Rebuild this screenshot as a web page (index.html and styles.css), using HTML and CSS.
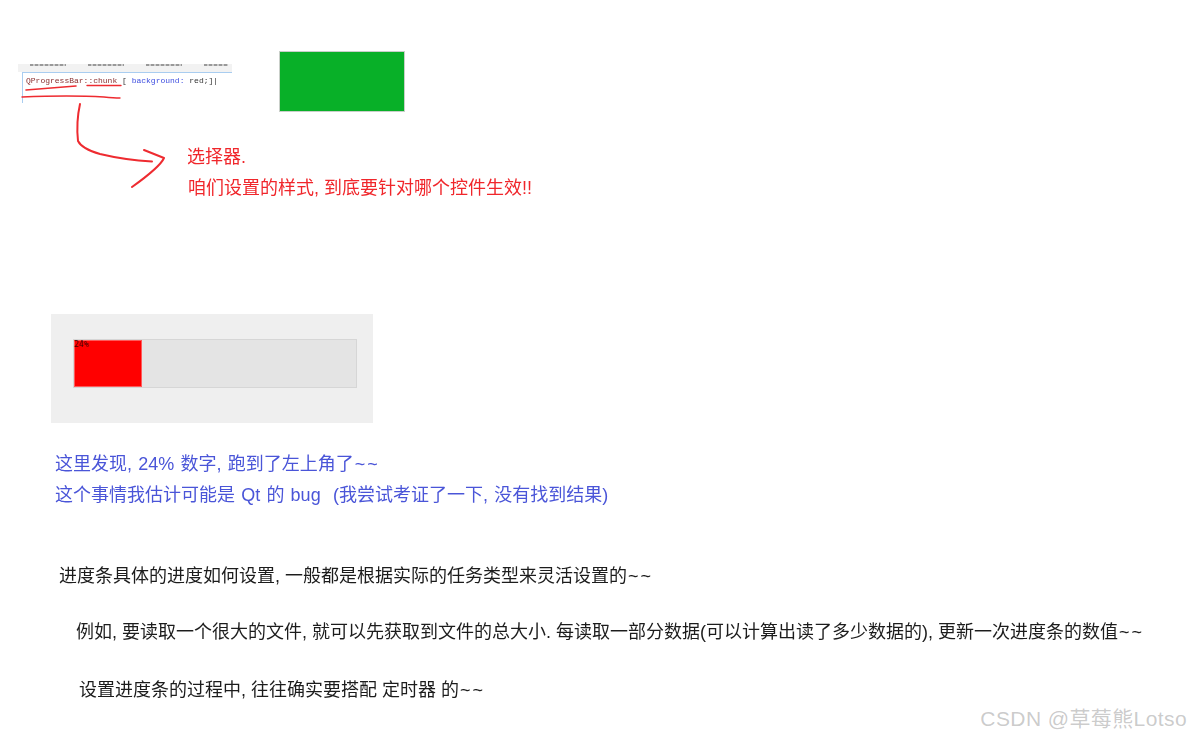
FILE: index.html
```html
<!DOCTYPE html>
<html lang="zh-CN">
<head>
<meta charset="utf-8">
<title>QProgressBar 笔记</title>
<link rel="stylesheet" href="styles.css">
</head>
<body>
<main class="canvas">
  <section class="top">
    <div class="snippet">
      <div class="ruler"><i></i><i></i><i></i><i></i></div>
      <div class="editor"><span class="sel">QProgressBar::chunk</span> <span class="brace">[</span> <span class="prop">background:</span> <span class="val">red;]|</span></div>
    </div>
    <div class="green"></div>
  </section>

  <svg class="ink" width="240" height="200" viewBox="0 0 240 200" aria-hidden="true">
    <g fill="none" stroke="#ee2b30" stroke-linecap="round" stroke-linejoin="round">
      <path stroke-width="1.6" d="M26 90Q50 88 76 86"/>
      <path stroke-width="1.4" d="M87 85.5H121"/>
      <path stroke-width="1.4" d="M22 97Q70 95 104 97Q114 98 120 98"/>
      <path stroke-width="2" d="M80 104Q76 122 78 141Q82 149 100 154Q125 160 152 161.5"/>
      <path stroke-width="2" d="M144 150L164 158Q160 167 132 187"/>
    </g>
  </svg>

  <div class="note note-red">
    <p>选择器.</p>
    <p class="indent-1">咱们设置的样式, 到底要针对哪个控件生效!!</p>
  </div>

  <figure class="demo">
    <div class="track">
      <div class="chunk" style="width:24%"><span class="pct">24%</span></div>
    </div>
  </figure>

  <div class="note note-blue">
    <p>这里发现, 24% 数字, 跑到了左上角了<span class="tilde">~~</span></p>
    <p>这个事情我估计可能是 Qt 的 bug&nbsp; (我尝试考证了一下, 没有找到结果)</p>
  </div>

  <div class="body-notes">
    <p class="p1">进度条具体的进度如何设置, 一般都是根据实际的任务类型来灵活设置的<span class="tilde">~~</span></p>
    <p class="p2">例如, 要读取一个很大的文件, 就可以先获取到文件的总大小. 每读取一部分数据(可以计算出读了多少数据的), 更新一次进度条的数值<span class="tilde">~~</span></p>
    <p class="p3">设置进度条的过程中, 往往确实要搭配 定时器 的<span class="tilde">~~</span></p>
  </div>

  <div class="watermark">CSDN @草莓熊Lotso</div>
</main>
</body>
</html>
```

FILE: styles.css
```css
* { box-sizing: border-box; }
html, body { margin: 0; padding: 0; background: #fff; }
body { width: 1190px; height: 739px; overflow: hidden; font-family: "Liberation Sans", "Noto Sans CJK SC", sans-serif; }
p { margin: 0; }
.canvas { position: relative; width: 1190px; height: 739px; padding-top: 51px; }

.top { display: flex; align-items: flex-start; padding-left: 18px; height: 61px; }
.snippet { width: 214px; height: 39px; margin-top: 13px; background: #fff; overflow: hidden; }
.ruler { display: flex; gap: 22px; height: 8px; padding-left: 12px; background: #f2f2f2; filter: blur(.5px); }
.ruler i { width: 36px; height: 2px; background: repeating-linear-gradient(90deg, #999 0 3px, #ccc 3px 5px); }
.ruler i:last-child { width: 24px; }
.editor { height: 31px; margin-left: 4px; padding: 2px 0 0 3px; border-top: 1px solid #a9cdf0; border-left: 1px solid #a9cdf0; font: 8px/12px "Liberation Mono", monospace; white-space: nowrap; filter: blur(.4px); }
.sel { color: #8a2f2f; }
.brace, .val { color: #333; }
.prop { color: #3f4fe0; }
.green { width: 126px; height: 61px; margin-left: 47px; background: #08b028; border: 1px solid #c9cfc9; }

.ink { position: absolute; left: 0; top: 0; filter: blur(.3px); }

.note { font-size: 18px; line-height: 31px; filter: blur(.3px); }
.note-red { margin: 30px 0 0 187px; color: #f0262b; height: 62px; }
.indent-1 { margin-left: 1px; }

.demo { width: 322px; height: 109px; margin: 110px 0 0 51px; padding: 25px 16px 0 22px; background: #efefef; }
.track { height: 49px; background: #e4e4e4; border: 1px solid #d6d6d6; }
.chunk { height: 47px; background: #ff0000; box-shadow: inset 0 0 0 1px #ff5a5a; }
.pct { display: block; font: 8px/9px "DejaVu Sans Mono", monospace; color: #4a0000; }

.note-blue { margin: 26px 0 0 55px; color: #4a55d8; word-spacing: 1.2px; }
.tilde { letter-spacing: 2px; margin-left: 1px; }

.body-notes { margin-top: 52px; color: #1c1c1c; font-size: 18px; line-height: 26px; filter: blur(.3px); white-space: nowrap; }
.p1 { margin-left: 59px; }
.p2 { margin: 30px 0 0 76px; }
.p3 { margin: 32px 0 0 79px; }

.watermark { position: absolute; right: 3px; top: 706px; font: 21px/26px "Liberation Sans", "Noto Sans CJK SC", sans-serif; letter-spacing: .4px; color: rgba(130,130,130,.42); white-space: nowrap; }
```
